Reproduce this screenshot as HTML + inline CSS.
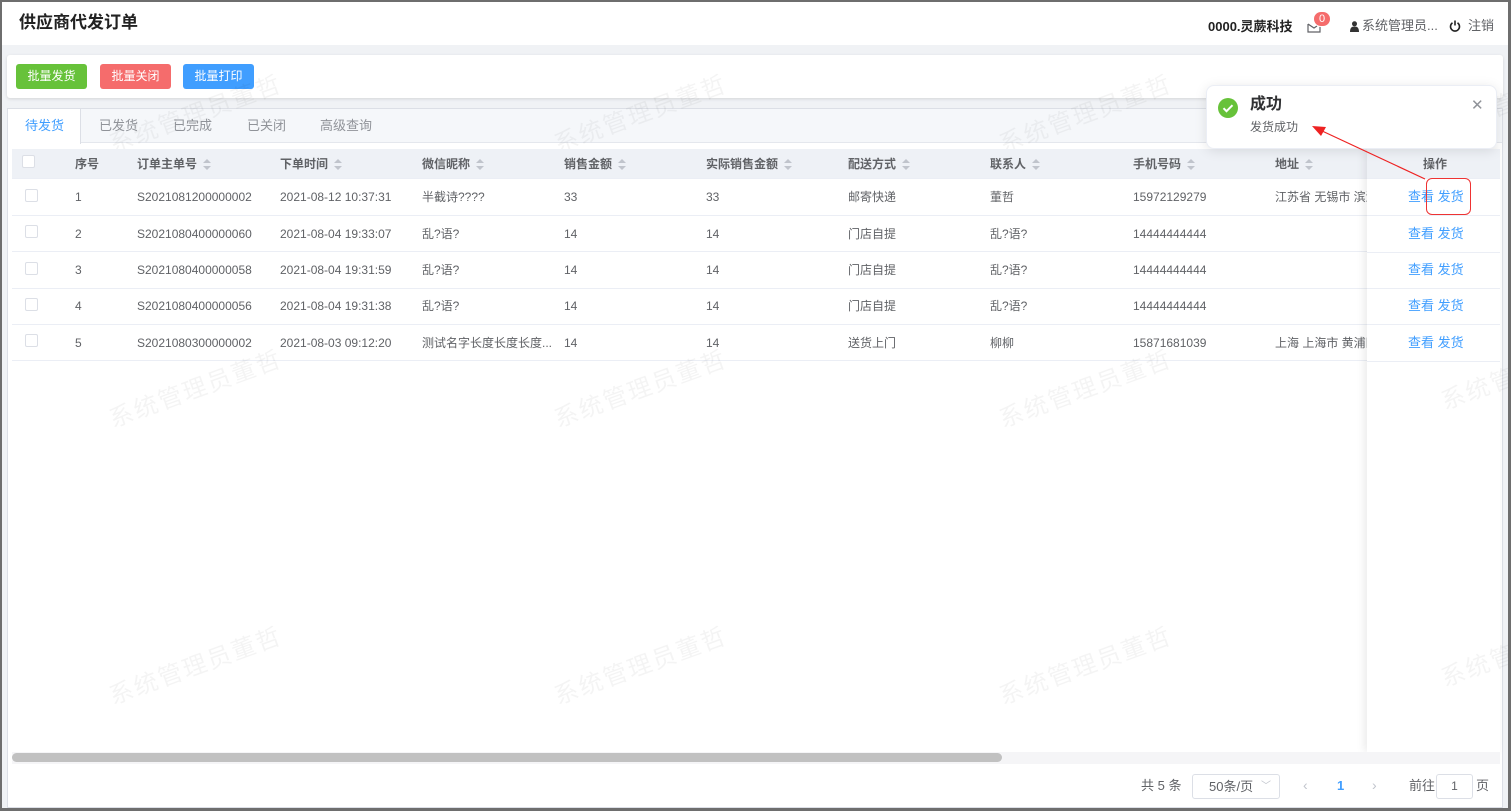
<!DOCTYPE html><html><head><meta charset="utf-8"><style>
*{box-sizing:border-box;margin:0;padding:0}
body{width:1511px;height:811px;overflow:hidden;font-family:"Liberation Sans","Noto Sans CJK SC",sans-serif;background:#f0f2f5;position:relative;color:#606266;font-size:12px}
.frame{position:absolute;inset:0;border:2px solid #6e6e6e;border-right-width:3px;border-bottom-width:3px;z-index:50;pointer-events:none}
.a{position:absolute;white-space:nowrap;line-height:14px}
.hdr{left:0;top:0;width:1511px;height:45px;background:#fff}
.btn{top:64px;height:25px;width:71px;border-radius:3px;color:#fff;font-size:12px;text-align:center;line-height:25px}
.th{font-weight:bold;color:#606266;top:157px}
.s{display:inline-block;vertical-align:middle;margin-left:6px;width:8px;height:12px;position:relative}
.s:before{content:"";position:absolute;left:0;top:0;border:4px solid transparent;border-bottom:4px solid #c0c4cc;border-top:none}
.s:after{content:"";position:absolute;left:0;top:7px;border:4px solid transparent;border-top:4px solid #c0c4cc;border-bottom:none}
.row{left:12px;width:1488px;height:36px;border-bottom:1px solid #ebeef5;background:#fff}
.cb{width:13px;height:13px;border:1px solid #dcdfe6;border-radius:2px;background:#fff}
.wm{color:rgba(0,0,0,0.045);font-size:24px;line-height:30px;transform:rotate(-20deg);letter-spacing:2px}
.blue{color:#409eff}
</style></head><body>
<div class="a hdr"></div>
<div class="a" style="left:19px;top:13px;font-size:17px;line-height:20px;font-weight:bold;color:#222">供应商代发订单</div>
<div class="a" style="left:1208px;top:20px;font-size:13px;font-weight:bold;color:#222">0000.灵蕨科技</div>
<svg class="a" style="left:1307px;top:20px" width="14" height="13" viewBox="0 0 14 13"><path d="M1 4v8h12V6M1 4l6 4 3-2" fill="none" stroke="#606266" stroke-width="1.2"/></svg>
<div class="a" style="left:1313px;top:11px;width:18px;height:16px;border-radius:8px;background:#f56c6c;color:#fff;font-size:11px;text-align:center;line-height:14px;border:1px solid #fff">0</div>
<svg class="a" style="left:1350px;top:21px" width="9" height="11" viewBox="0 0 9 11"><circle cx="4.5" cy="2.8" r="2.5" fill="#333"/><path d="M0 11c0-4 1.5-5.5 4.5-5.5S9 7 9 11z" fill="#333"/></svg>
<div class="a" style="left:1362px;top:19px;font-size:13px;color:#606266">系统管理员...</div>
<svg class="a" style="left:1449px;top:20px" width="12" height="12" viewBox="0 0 12 12"><path d="M3.5 2.8A4.5 4.5 0 1 0 8.5 2.8" fill="none" stroke="#222" stroke-width="1.6"/><path d="M6 0.5v5" stroke="#222" stroke-width="1.6"/></svg>
<div class="a" style="left:1468px;top:19px;font-size:13px;color:#606266">注销</div>

<div class="a" style="left:7px;top:55px;width:1496px;height:43px;background:#fff;border-radius:3px;box-shadow:0 1px 3px rgba(0,0,0,.12)"></div>
<div class="a btn" style="left:16px;background:#67c23a;line-height:25px">批量发货</div>
<div class="a btn" style="left:100px;background:#f56c6c;line-height:25px">批量关闭</div>
<div class="a btn" style="left:183px;background:#409eff;line-height:25px">批量打印</div>

<div class="a" style="left:7px;top:108px;width:1496px;height:700px;background:#fff;border:1px solid #dcdfe6"></div>
<div class="a" style="left:8px;top:109px;width:1494px;height:34px;background:#f5f7fa;border-bottom:1px solid #e4e7ed"></div>
<div class="a" style="left:8px;top:109px;width:73px;height:35px;background:#fff;border-right:1px solid #dcdfe6"></div>
<div class="a blue" style="left:25px;top:119px;font-size:13px">待发货</div>
<div class="a" style="left:99px;top:119px;font-size:13px;color:#909399">已发货</div>
<div class="a" style="left:173px;top:119px;font-size:13px;color:#909399">已完成</div>
<div class="a" style="left:247px;top:119px;font-size:13px;color:#909399">已关闭</div>
<div class="a" style="left:320px;top:119px;font-size:13px;color:#909399">高级查询</div>

<!-- watermarks -->
<div class="a wm" style="left:105px;top:100px">系统管理员董哲</div>
<div class="a wm" style="left:550px;top:100px">系统管理员董哲</div>
<div class="a wm" style="left:995px;top:100px">系统管理员董哲</div>
<div class="a wm" style="left:1440px;top:100px">系统管</div>

<div class="a" style="left:12px;top:149px;width:1488px;height:30px;background:#eef1f6;border-bottom:1px solid #ebeef5"></div>
<div class="a cb" style="left:22px;top:155px"></div>
<div class="a th" style="left:75px">序号</div>
<div class="a th" style="left:137px">订单主单号<span class="s"></span></div>
<div class="a th" style="left:280px">下单时间<span class="s"></span></div>
<div class="a th" style="left:422px">微信昵称<span class="s"></span></div>
<div class="a th" style="left:564px">销售金额<span class="s"></span></div>
<div class="a th" style="left:706px">实际销售金额<span class="s"></span></div>
<div class="a th" style="left:848px">配送方式<span class="s"></span></div>
<div class="a th" style="left:990px">联系人<span class="s"></span></div>
<div class="a th" style="left:1133px">手机号码<span class="s"></span></div>
<div class="a th" style="left:1275px">地址<span class="s"></span></div>

<div class="a row" style="top:180px"></div>
<div class="a row" style="top:216px"></div>
<div class="a row" style="top:253px"></div>
<div class="a row" style="top:289px"></div>
<div class="a row" style="top:325px"></div>

<div class="a" style="left:25px;top:189px"><div class="cb"></div></div>
<div class="a" style="left:25px;top:225px"><div class="cb"></div></div>
<div class="a" style="left:25px;top:262px"><div class="cb"></div></div>
<div class="a" style="left:25px;top:298px"><div class="cb"></div></div>
<div class="a" style="left:25px;top:334px"><div class="cb"></div></div>

<div class="a" style="left:75px;top:190px">1</div><div class="a" style="left:137px;top:190px">S2021081200000002</div><div class="a" style="left:280px;top:190px">2021-08-12 10:37:31</div><div class="a" style="left:422px;top:190px">半截诗????</div><div class="a" style="left:564px;top:190px">33</div><div class="a" style="left:706px;top:190px">33</div><div class="a" style="left:848px;top:190px">邮寄快递</div><div class="a" style="left:990px;top:190px">董哲</div><div class="a" style="left:1133px;top:190px">15972129279</div><div class="a" style="left:1275px;top:190px">江苏省 无锡市 滨湖</div>
<div class="a" style="left:75px;top:227px">2</div><div class="a" style="left:137px;top:227px">S2021080400000060</div><div class="a" style="left:280px;top:227px">2021-08-04 19:33:07</div><div class="a" style="left:422px;top:227px">乱?语?</div><div class="a" style="left:564px;top:227px">14</div><div class="a" style="left:706px;top:227px">14</div><div class="a" style="left:848px;top:227px">门店自提</div><div class="a" style="left:990px;top:227px">乱?语?</div><div class="a" style="left:1133px;top:227px">14444444444</div>
<div class="a" style="left:75px;top:263px">3</div><div class="a" style="left:137px;top:263px">S2021080400000058</div><div class="a" style="left:280px;top:263px">2021-08-04 19:31:59</div><div class="a" style="left:422px;top:263px">乱?语?</div><div class="a" style="left:564px;top:263px">14</div><div class="a" style="left:706px;top:263px">14</div><div class="a" style="left:848px;top:263px">门店自提</div><div class="a" style="left:990px;top:263px">乱?语?</div><div class="a" style="left:1133px;top:263px">14444444444</div>
<div class="a" style="left:75px;top:299px">4</div><div class="a" style="left:137px;top:299px">S2021080400000056</div><div class="a" style="left:280px;top:299px">2021-08-04 19:31:38</div><div class="a" style="left:422px;top:299px">乱?语?</div><div class="a" style="left:564px;top:299px">14</div><div class="a" style="left:706px;top:299px">14</div><div class="a" style="left:848px;top:299px">门店自提</div><div class="a" style="left:990px;top:299px">乱?语?</div><div class="a" style="left:1133px;top:299px">14444444444</div>
<div class="a" style="left:75px;top:336px">5</div><div class="a" style="left:137px;top:336px">S2021080300000002</div><div class="a" style="left:280px;top:336px">2021-08-03 09:12:20</div><div class="a" style="left:422px;top:336px">测试名字长度长度长度...</div><div class="a" style="left:564px;top:336px">14</div><div class="a" style="left:706px;top:336px">14</div><div class="a" style="left:848px;top:336px">送货上门</div><div class="a" style="left:990px;top:336px">柳柳</div><div class="a" style="left:1133px;top:336px">15871681039</div><div class="a" style="left:1275px;top:336px">上海 上海市 黄浦区</div>

<div class="a wm" style="left:105px;top:375px">系统管理员董哲</div>
<div class="a wm" style="left:550px;top:375px">系统管理员董哲</div>
<div class="a wm" style="left:995px;top:375px">系统管理员董哲</div>
<div class="a wm" style="left:105px;top:652px">系统管理员董哲</div>
<div class="a wm" style="left:550px;top:652px">系统管理员董哲</div>
<div class="a wm" style="left:995px;top:652px">系统管理员董哲</div>

<!-- fixed right column -->
<div class="a" style="left:1367px;top:149px;width:133px;height:603px;background:#fff;box-shadow:-3px 0 8px rgba(0,0,0,.08)"></div>
<div class="a" style="left:1367px;top:149px;width:133px;height:30px;background:#eef1f6;border-bottom:1px solid #ebeef5"></div>
<div class="a th" style="left:1423px">操作</div>
<div class="a" style="left:1367px;top:215px;width:133px;border-top:1px solid #ebeef5"></div>
<div class="a" style="left:1367px;top:252px;width:133px;border-top:1px solid #ebeef5"></div>
<div class="a" style="left:1367px;top:288px;width:133px;border-top:1px solid #ebeef5"></div>
<div class="a" style="left:1367px;top:324px;width:133px;border-top:1px solid #ebeef5"></div>
<div class="a" style="left:1367px;top:361px;width:133px;border-top:1px solid #ebeef5"></div>
<div class="a blue" style="left:1408px;top:190px;font-size:13px">查看 发货</div>
<div class="a blue" style="left:1408px;top:227px;font-size:13px">查看 发货</div>
<div class="a blue" style="left:1408px;top:263px;font-size:13px">查看 发货</div>
<div class="a blue" style="left:1408px;top:299px;font-size:13px">查看 发货</div>
<div class="a blue" style="left:1408px;top:336px;font-size:13px">查看 发货</div>
<div class="a" style="left:1426px;top:178px;width:45px;height:37px;border:1px solid #e33;border-radius:6px"></div>
<div class="a wm" style="left:1440px;top:375px">系统管</div>
<div class="a wm" style="left:1440px;top:652px">系统管</div>

<!-- scrollbar -->
<div class="a" style="left:12px;top:752px;width:1488px;height:12px;background:#f5f5f7"></div>
<div class="a" style="left:12px;top:753px;width:990px;height:9px;background:#c1c1c1;border-radius:5px"></div>

<!-- pagination -->
<div class="a" style="left:1141px;top:779px;font-size:13px">共 5 条</div>
<div class="a" style="left:1192px;top:774px;width:88px;height:25px;border:1px solid #dcdfe6;border-radius:3px;font-size:13px;padding-left:16px;line-height:23px">50条/页<span style="position:absolute;right:8px;top:0;color:#c0c4cc;font-size:10px">﹀</span></div>
<div class="a" style="left:1303px;top:778px;font-size:14px;color:#c0c4cc">‹</div>
<div class="a blue" style="left:1337px;top:779px;font-size:13px;font-weight:bold">1</div>
<div class="a" style="left:1372px;top:778px;font-size:14px;color:#c0c4cc">›</div>
<div class="a" style="left:1409px;top:779px;font-size:13px">前往</div>
<div class="a" style="left:1436px;top:774px;width:37px;height:25px;border:1px solid #dcdfe6;border-radius:3px;text-align:center;line-height:23px">1</div>
<div class="a" style="left:1476px;top:779px;font-size:13px">页</div>

<!-- notification -->
<div class="a" style="left:1206px;top:85px;width:291px;height:64px;background:#fff;border:1px solid #ebeef5;border-radius:8px;box-shadow:0 2px 12px rgba(0,0,0,.1)"></div>
<svg class="a" style="left:1218px;top:98px" width="20" height="20" viewBox="0 0 20 20"><circle cx="10" cy="10" r="10" fill="#67c23a"/><path d="M5.5 10.2l3 3 6-6" fill="none" stroke="#fff" stroke-width="2"/></svg>
<div class="a" style="left:1250px;top:95px;font-size:16px;line-height:20px;font-weight:bold;color:#303133">成功</div>
<div class="a" style="left:1250px;top:120px;font-size:12px;color:#606266">发货成功</div>
<div class="a" style="left:1471px;top:99px;font-size:15px;color:#909399">✕</div>
<svg class="a" style="left:1300px;top:115px" width="140" height="70" viewBox="0 0 140 70"><path d="M125 64L20 15" stroke="#e22" stroke-width="1.2"/><path d="M12 11l14 1-5 9z" fill="#e22"/></svg>
<div class="frame"></div>
</body></html>
